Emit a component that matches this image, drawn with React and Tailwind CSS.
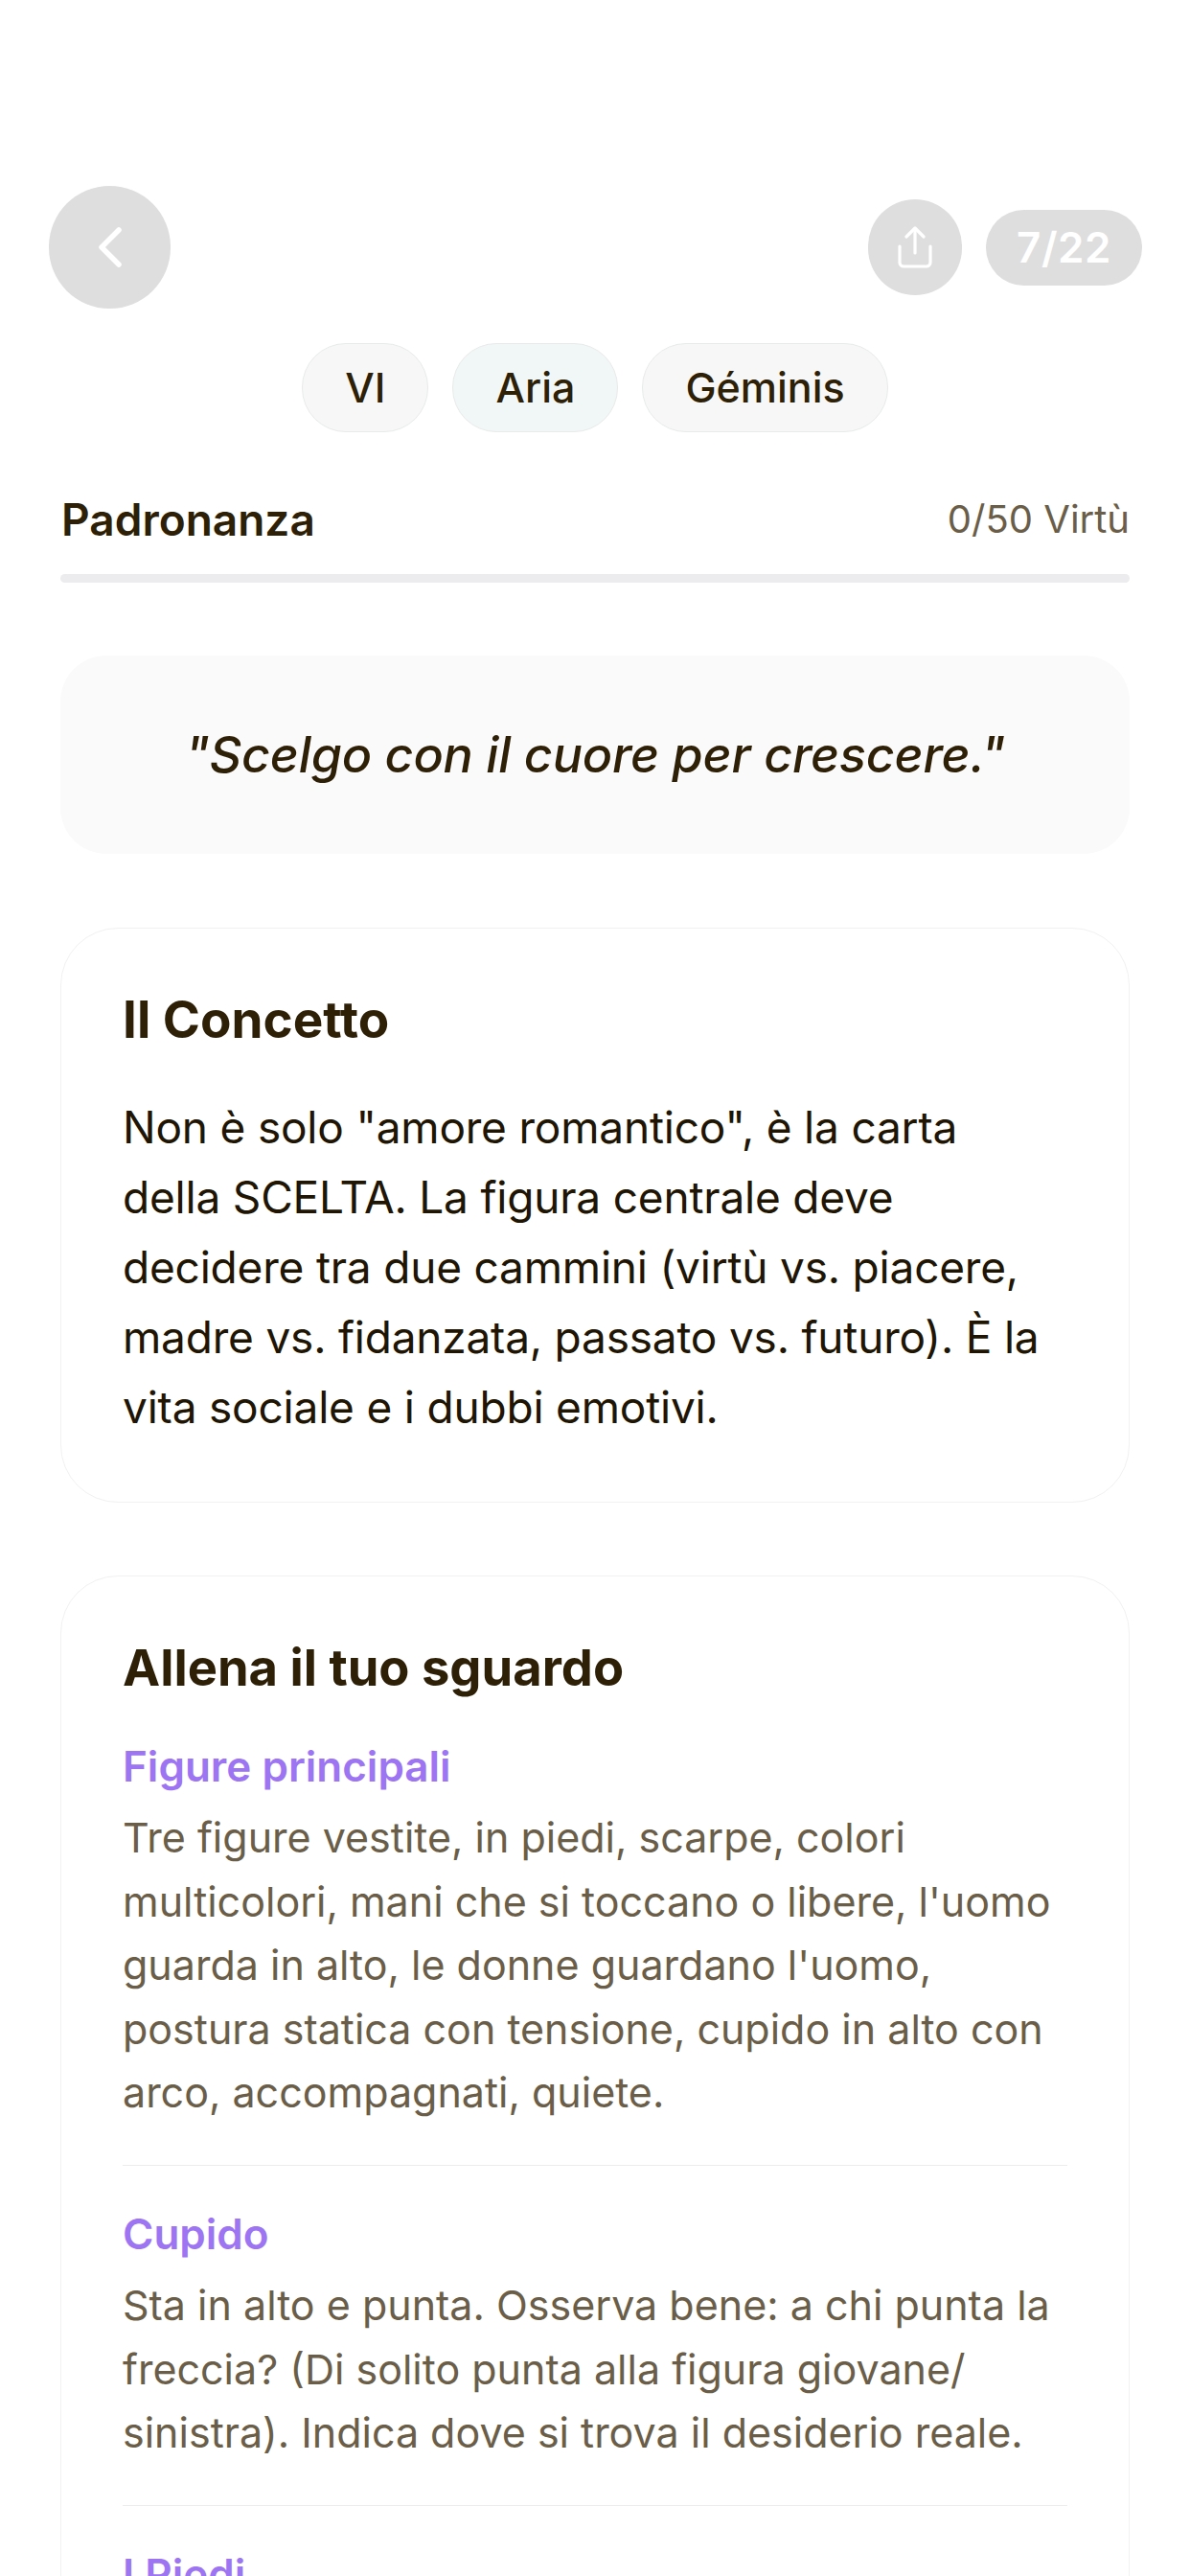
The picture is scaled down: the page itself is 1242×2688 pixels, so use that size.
const chips = [
  { label: "VI", bg: "bg-[#f7f7f7]" },
  { label: "Aria", bg: "bg-[#f1f6f7]" },
  { label: "Géminis", bg: "bg-[#f7f7f7]" },
];

const points = [
  {
    title: "Figure principali",
    lines: "Tre figure vestite, in piedi, scarpe, colori multicolori, mani che si toccano o libere, l'uomo guarda in alto, le donne guardano l'uomo, postura statica con tensione, cupido in alto con arco, accompagnati, quiete.",
  },
  {
    title: "Cupido",
    lines: "Sta in alto e punta. Osserva bene: a chi punta la freccia? (Di solito punta alla figura giovane/ sinistra). Indica dove si trova il desiderio reale.",
  },
  { title: "I Piedi", lines: "" },
];

function BackIcon() {
  return (
    <svg width="34" height="52" viewBox="0 0 34 52" fill="none" stroke="white" strokeWidth="5.5" strokeLinecap="round" strokeLinejoin="round">
      <path d="M26 8L8 26l18 18" />
    </svg>
  );
}

function ShareIcon() {
  return (
    <svg width="36" height="44" viewBox="0 0 36 44" fill="none" stroke="white" strokeWidth="3.2" strokeLinecap="round" strokeLinejoin="round">
      <path d="M18 28V3" />
      <path d="M9 11l9-9 9 9" />
      <path d="M2 21v17a4 4 0 0 0 4 4h24a4 4 0 0 0 4-4V21" />
    </svg>
  );
}

export default function App() {
  return (
    <div className="h-[2688px] overflow-hidden bg-white font-['Inter',sans-serif] text-[#2e1f07]">
      {/* Top bar */}
      <div className="flex items-center justify-between pt-[194px] pl-[51px] pr-[50px]">
        <button className="flex h-[128px] w-[127px] items-center justify-center rounded-full bg-[#dedede]">
          <BackIcon />
        </button>
        <div className="flex items-center gap-[25px]">
          <button className="flex h-[100px] w-[98px] items-center justify-center rounded-full bg-[#dedede]">
            <ShareIcon />
          </button>
          <div className="flex h-[79px] w-[163px] items-center justify-center rounded-full bg-[#dedede] text-[44px] font-semibold tracking-[0.5px] text-white">
            7/22
          </div>
        </div>
      </div>

      {/* Chips */}
      <div className="mt-[36px] flex justify-center gap-[25px]">
        {chips.map((chip) => (
          <div key={chip.label} className={`flex h-[93px] items-center rounded-[46px] border border-[#e9ebeb] px-[44px] text-[43px] font-medium ${chip.bg}`}>
            {chip.label}
          </div>
        ))}
      </div>

      <div className="px-[63px]">
        {/* Mastery */}
        <div className="mt-[63px] flex items-center justify-between pl-[1px]">
          <span className="text-[46px] font-semibold leading-[56px]">Padronanza</span>
          <span className="text-[40px] leading-[56px] text-[#6b5e49]">0/50 Virtù</span>
        </div>
        <div className="mt-[29px] h-[9px] rounded-full bg-[#ececee]" />

        {/* Quote */}
        <div className="mt-[76px] flex h-[207px] items-center justify-center rounded-[48px] bg-[#fafafa] text-[52px] font-medium italic tracking-[-0.2px]">
          "Scelgo con il cuore per crescere."
        </div>

        {/* Concept */}
        <div className="mt-[77px] rounded-[60px] border border-[#f1f1f1] px-[64px] pt-[63px] pb-[62px]">
          <h2 className="text-[53px] font-bold leading-[64px]">Il Concetto</h2>
          <p className="mt-[44px] pr-[10px] text-[46px] leading-[73px] tracking-[-0.2px] text-[#201503]">
            Non è solo "amore romantico", è la carta della SCELTA. La figura centrale deve decidere tra due cammini (virtù vs. piacere, madre vs. fidanzata, passato vs. futuro). È la vita sociale e i dubbi emotivi.
          </p>
        </div>

        {/* Training */}
        <div className="mt-[76px] min-h-[1000px] rounded-t-[60px] border border-[#f1f1f1] px-[64px] pt-[63px]">
          <h2 className="text-[52.5px] font-bold leading-[64px]">Allena il tuo sguardo</h2>
          {points.map((point, idx) => (
            <div key={point.title} className={idx > 0 ? "mt-[42px] border-t border-[#ececec] pt-[43px]" : "mt-[43px]"}>
              <h3 className="text-[44px] font-semibold leading-[56px] text-[#9d75f3]">{point.title}</h3>
              {point.lines && <p className="mt-[13px] pr-[2px] text-[43px] leading-[66.6px] text-[#6b5e49]">{point.lines}</p>}
            </div>
          ))}
        </div>
      </div>
    </div>
  );
}
